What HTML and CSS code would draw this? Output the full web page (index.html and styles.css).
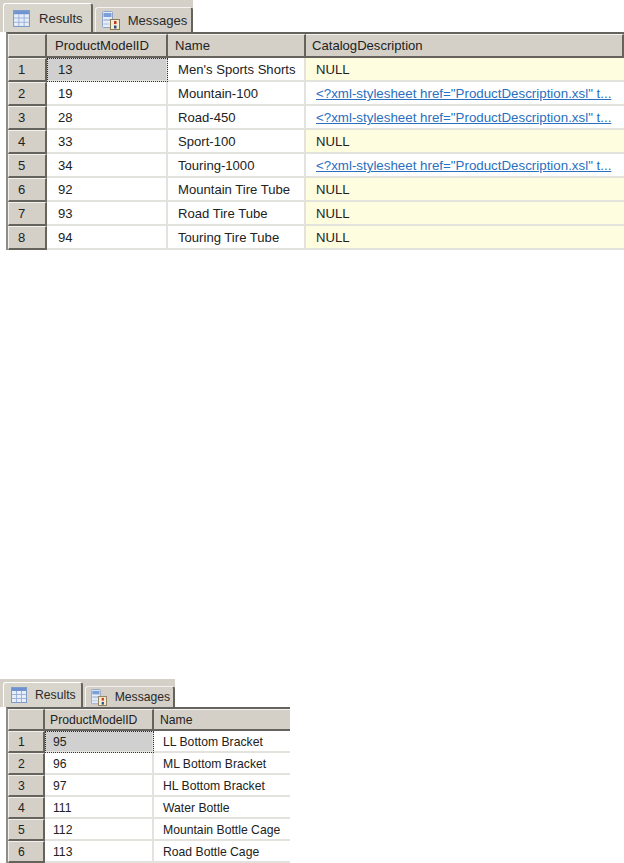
FILE: index.html
```html
<!DOCTYPE html>
<html lang="en">
<head>
<meta charset="utf-8">
<title>Query results</title>
<link rel="stylesheet" href="styles.css">
</head>
<body>
<section class="panel large">
  <div class="tabs">
    <div class="tab active">
      <svg class="ico" viewBox="0 0 16 16"><rect x="0.5" y="0.5" width="15" height="15" fill="#e8eef8" stroke="#7f9cc8"/><rect x="1" y="1" width="14" height="3" fill="#6f93d0"/><path d="M1 7.5h14M1 11.5h14M5.5 4v11M10.5 4v11" stroke="#9db4d8" fill="none"/></svg>
      <span>Results</span>
    </div>
    <div class="tab">
      <svg class="ico msg" viewBox="0 0 18 19"><rect x="0.5" y="0.5" width="10" height="16" rx="1" fill="#e6edf8" stroke="#8ea3c6"/><rect x="1.5" y="2" width="8" height="4" fill="#7c9fd8"/><rect x="1.5" y="8" width="8" height="2" fill="#b4c5e2"/><rect x="1.5" y="12" width="6" height="2" fill="#c9d5ea"/><rect x="8.5" y="8.5" width="9" height="10" fill="#f3ecd2" stroke="#8a7a50"/><rect x="12" y="10" width="2.5" height="3" fill="#c0392b"/><rect x="12" y="14.5" width="2.5" height="3" fill="#2c4f86"/></svg>
      <span>Messages</span>
    </div>
  </div>
  <div class="grid">
    <div class="row head"><div class="rh"></div><div class="c id">ProductModelID</div><div class="c name">Name</div><div class="c desc">CatalogDescription</div></div>
    <div class="row"><div class="rh">1</div><div class="c id sel">13</div><div class="c name">Men's Sports Shorts</div><div class="c desc null">NULL</div></div>
    <div class="row"><div class="rh">2</div><div class="c id">19</div><div class="c name">Mountain-100</div><div class="c desc"><a class="link">&lt;?xml-stylesheet href="ProductDescription.xsl" t...</a></div></div>
    <div class="row"><div class="rh">3</div><div class="c id">28</div><div class="c name">Road-450</div><div class="c desc"><a class="link">&lt;?xml-stylesheet href="ProductDescription.xsl" t...</a></div></div>
    <div class="row"><div class="rh">4</div><div class="c id">33</div><div class="c name">Sport-100</div><div class="c desc null">NULL</div></div>
    <div class="row"><div class="rh">5</div><div class="c id">34</div><div class="c name">Touring-1000</div><div class="c desc"><a class="link">&lt;?xml-stylesheet href="ProductDescription.xsl" t...</a></div></div>
    <div class="row"><div class="rh">6</div><div class="c id">92</div><div class="c name">Mountain Tire Tube</div><div class="c desc null">NULL</div></div>
    <div class="row"><div class="rh">7</div><div class="c id">93</div><div class="c name">Road Tire Tube</div><div class="c desc null">NULL</div></div>
    <div class="row"><div class="rh">8</div><div class="c id">94</div><div class="c name">Touring Tire Tube</div><div class="c desc null">NULL</div></div>
  </div>
</section>
<section class="panel small">
  <div class="tabs">
    <div class="tab active">
      <svg class="ico" viewBox="0 0 16 16"><rect x="0.5" y="0.5" width="15" height="15" fill="#e8eef8" stroke="#7f9cc8"/><rect x="1" y="1" width="14" height="3" fill="#6f93d0"/><path d="M1 7.5h14M1 11.5h14M5.5 4v11M10.5 4v11" stroke="#9db4d8" fill="none"/></svg>
      <span>Results</span>
    </div>
    <div class="tab">
      <svg class="ico msg" viewBox="0 0 18 19"><rect x="0.5" y="0.5" width="10" height="16" rx="1" fill="#e6edf8" stroke="#8ea3c6"/><rect x="1.5" y="2" width="8" height="4" fill="#7c9fd8"/><rect x="1.5" y="8" width="8" height="2" fill="#b4c5e2"/><rect x="1.5" y="12" width="6" height="2" fill="#c9d5ea"/><rect x="8.5" y="8.5" width="9" height="10" fill="#f3ecd2" stroke="#8a7a50"/><rect x="12" y="10" width="2.5" height="3" fill="#c0392b"/><rect x="12" y="14.5" width="2.5" height="3" fill="#2c4f86"/></svg>
      <span>Messages</span>
    </div>
  </div>
  <div class="grid">
    <div class="row head"><div class="rh"></div><div class="c id">ProductModelID</div><div class="c name">Name</div></div>
    <div class="row"><div class="rh">1</div><div class="c id sel">95</div><div class="c name">LL Bottom Bracket</div></div>
    <div class="row"><div class="rh">2</div><div class="c id">96</div><div class="c name">ML Bottom Bracket</div></div>
    <div class="row"><div class="rh">3</div><div class="c id">97</div><div class="c name">HL Bottom Bracket</div></div>
    <div class="row"><div class="rh">4</div><div class="c id">111</div><div class="c name">Water Bottle</div></div>
    <div class="row"><div class="rh">5</div><div class="c id">112</div><div class="c name">Mountain Bottle Cage</div></div>
    <div class="row"><div class="rh">6</div><div class="c id">113</div><div class="c name">Road Bottle Cage</div></div>
  </div>
</section>
</body>
</html>
```
FILE: styles.css
```css
* { box-sizing: border-box; }
html, body { margin: 0; padding: 0; background: #fff; overflow: hidden; }
body { width: 624px; height: 863px; font-family: "Liberation Sans", Arial, sans-serif; color: #222; }

.panel { display: flex; flex-direction: column; overflow: hidden; }
.large { width: 624px; height: 250px; font-size: 13.1px; --rowh: 24px; --headh: 24px; --rhw: 39px; --idw: 121px; --namew: 138px; --tabs: 32px; --tabsw: 193px; --pad: 6px; --id-pad: 11px; --name-pad: 10px; --h-id: 8px; --h-name: 7px; --rh-pad: 9px; }
.small { width: 290px; height: 184px; margin-top: 429px; font-size: 12.2px; --rowh: 22px; --headh: 22px; --rhw: 37px; --idw: 109px; --namew: 136px; --tabs: 28px; --tabsw: 175px; --pad: 6px; --id-pad: 8px; --name-pad: 9px; --h-id: 5px; --h-name: 6px; --rh-pad: 9px; }

.tabs { display: flex; align-items: flex-end; gap: 2px; width: var(--tabsw); height: var(--tabs); padding-left: 3px; background: #d4d0c8; flex: none; }
.tab { display: flex; align-items: center; gap: 8px; height: calc(var(--tabs) - 7px); padding: 0 4px 0 6px; background: #d4d0c8; border: 1px solid #f4f2ee; border-bottom: 0; border-right: 2px solid #66635c; border-radius: 3px 3px 0 0; color: #2a2a2a; }
.tab.active { gap: 9px; height: calc(var(--tabs) - 3px); padding: 0 8px 0 9px; background: #d8d5cd; border-top-color: #fff; border-left-color: #fff; }
.ico { width: 17px; height: 17px; flex: none; }
.ico.msg { width: 18px; height: 19px; }
.small .ico { width: 16px; height: 16px; }
.small .ico.msg { width: 16px; height: 17px; }
.small .tab { gap: 8px; padding: 0 3px 0 5px; }
.small .tab.active { padding: 0 5px 0 7px; gap: 8px; }

.grid { flex: 1; margin-left: var(--pad); background: #fff; border-top: 2px solid #65635d; border-left: 2px solid #8f8d87; overflow: hidden; }
.row { display: flex; height: var(--rowh); }
.row.head { height: var(--headh); background: #d4d0c8; }
.c { display: flex; align-items: center; flex: none; padding-top: 1px; border-right: 2px solid #e4e2dc; border-bottom: 2px solid #e4e2dc; white-space: nowrap; overflow: hidden; }
.id { width: var(--idw); padding-left: var(--id-pad); }
.name { width: var(--namew); padding-left: var(--name-pad); }
.desc { flex: 1; padding-left: 10px; border-right: 0; }
.null { background: #fffde0; }
.link { color: #2a6fc0; text-decoration: underline; font-size: 1.018em; }
.sel { background: #d0d0d0; outline: 1px dotted #333; outline-offset: -1px; }
.rh { flex: none; display: flex; align-items: center; padding-left: var(--rh-pad); width: var(--rhw); background: #d4d0c8; border: 1px solid #f2f0ec; border-right: 2px solid #66635c; border-bottom: 2px solid #66635c; color: #222; }
.head .c { padding-top: 0; background: #d4d0c8; border-top: 1px solid #f4f2ee; border-right: 2px solid #66635c; border-bottom: 2px solid #66635c; }
.head .id { padding-left: var(--h-id); }
.head .name { padding-left: var(--h-name); }
.head .desc { padding-left: 6px; }
.small .name { flex: 1; }
.small .head .name { border-right: 0; }
.small .row .name { border-right: 0; }
```
